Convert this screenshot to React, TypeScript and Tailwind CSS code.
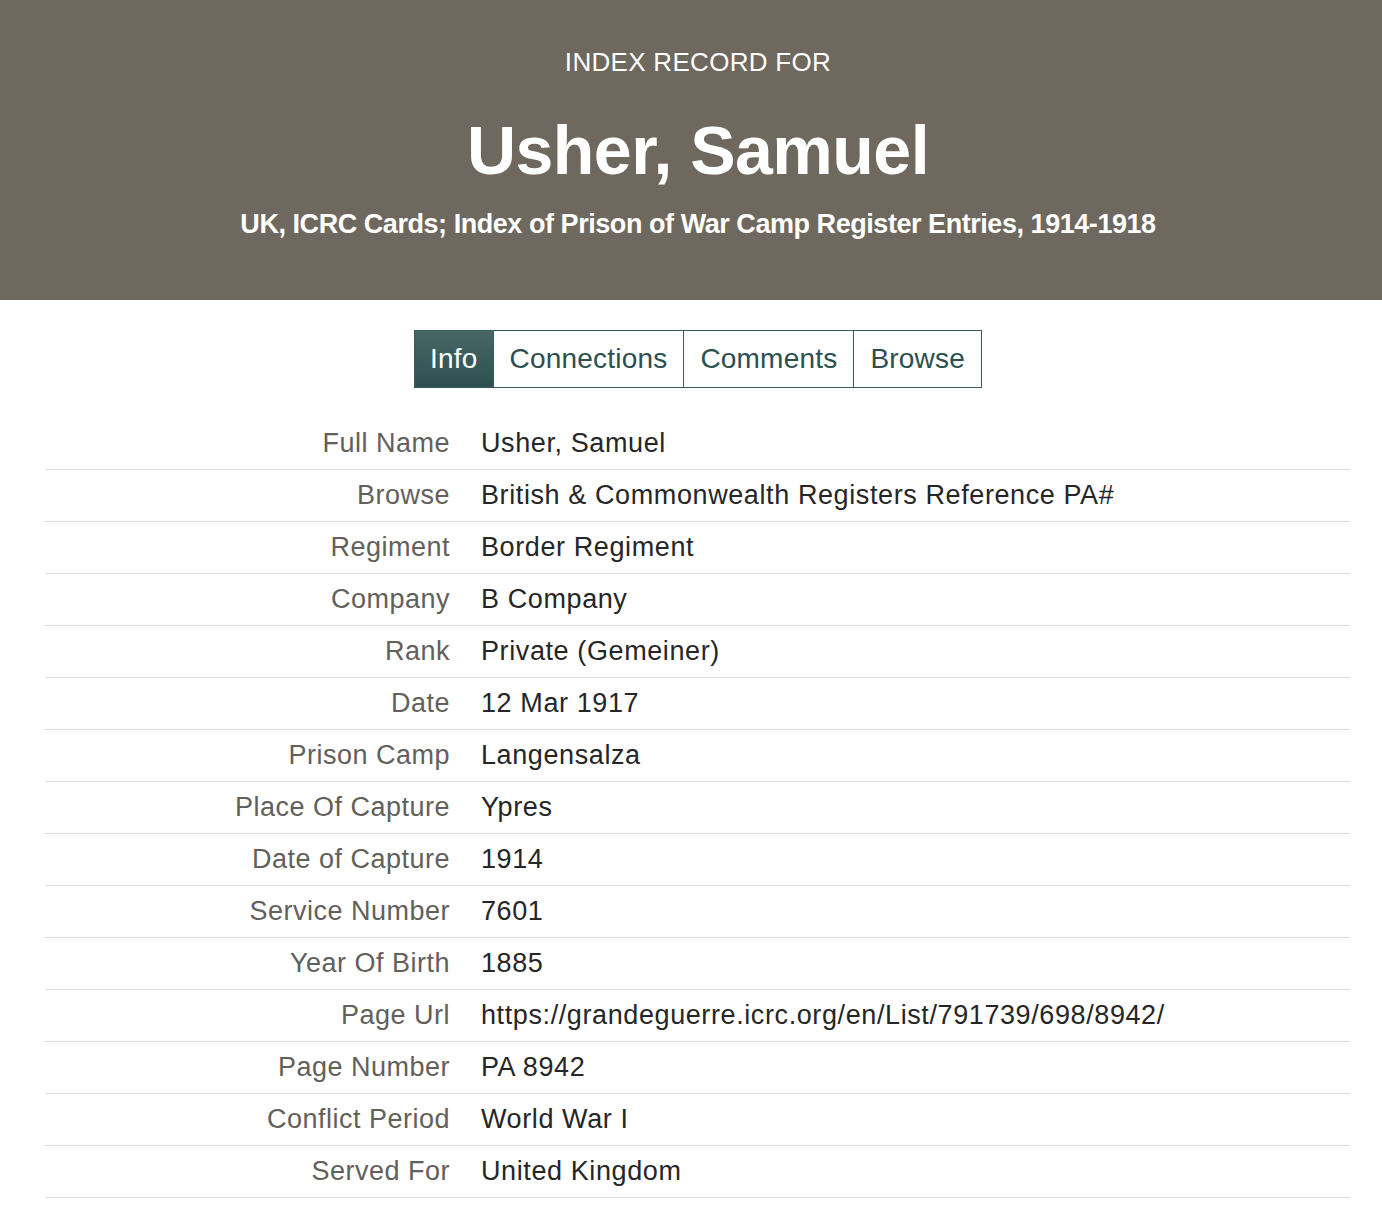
const rows: [string, string][] = [
  ["Full Name", "Usher, Samuel"],
  ["Browse", "British & Commonwealth Registers Reference PA#"],
  ["Regiment", "Border Regiment"],
  ["Company", "B Company"],
  ["Rank", "Private (Gemeiner)"],
  ["Date", "12 Mar 1917"],
  ["Prison Camp", "Langensalza"],
  ["Place Of Capture", "Ypres"],
  ["Date of Capture", "1914"],
  ["Service Number", "7601"],
  ["Year Of Birth", "1885"],
  ["Page Url", "https://grandeguerre.icrc.org/en/List/791739/698/8942/"],
  ["Page Number", "PA 8942"],
  ["Conflict Period", "World War I"],
  ["Served For", "United Kingdom"],
];

const tabs = ["Info", "Connections", "Comments", "Browse"];

export default function App() {
  return (
    <div className="min-h-screen bg-white font-['Liberation_Sans',Arial,sans-serif]">
      {/* Header band */}
      <header className="h-[300px] bg-[#6e685e] flex flex-col items-center pl-[14px] text-white">
        <div className="mt-[46px] text-[26px] leading-[32px] tracking-[0.3px]">INDEX RECORD FOR</div>
        <h1 className="mt-[32px] text-[68px] leading-[80px] font-bold tracking-[-0.5px]">Usher, Samuel</h1>
        <div className="mt-[17px] text-[27px] leading-[34px] font-bold tracking-[-0.45px]">
          UK, ICRC Cards; Index of Prison of War Camp Register Entries, 1914-1918
        </div>
      </header>

      {/* Tabs */}
      <nav className="flex justify-center pt-[30px] pl-[14px]">
        <div className="flex border border-[#385b5c]">
          {tabs.map((t, i) => (
            <div
              key={t}
              className={
                i === 0
                  ? "h-[56px] px-[15px] flex items-center text-[28px] tracking-[0.2px] text-white bg-gradient-to-b from-[#466766] to-[#2e5050]"
                  : "h-[56px] px-[16px] flex items-center text-[28px] tracking-[0.2px] text-[#2c4f50] bg-white border-l border-[#385b5c]"
              }
            >
              {t}
            </div>
          ))}
        </div>
      </nav>

      {/* Record table */}
      <div className="mx-[45px] mt-[30px] mr-[32px]">
        {rows.map(([label, value]) => (
          <div key={label} className="grid grid-cols-[436px_1fr] h-[52px] items-center border-b border-[#dcdcdc]">
            <div className="text-right pr-[31px] text-[27px] text-[#63605b] tracking-[0.5px]">{label}</div>
            <div className="text-[27px] text-[#262626] tracking-[0.6px]">{value}</div>
          </div>
        ))}
      </div>
    </div>
  );
}
